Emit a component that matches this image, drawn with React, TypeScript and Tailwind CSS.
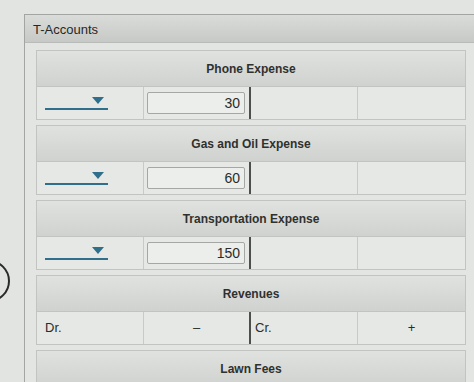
const accounts = [
  { name: 'Phone Expense', value: '30' },
  { name: 'Gas and Oil Expense', value: '60' },
  { name: 'Transportation Expense', value: '150' },
]

function CardHeader({ title }: { title: string }) {
  return (
    <div className="h-[36px] flex items-center justify-center bg-gradient-to-b from-[#e0e2df] to-[#d0d2cf] border-b border-[#c2c4c1] text-[12px] font-bold text-[#2f312f]">
      {title}
    </div>
  )
}

function Dropdown() {
  return (
    <div className="h-full flex items-end pb-[9px] pl-[8px]">
      <div className="relative w-[63px] h-[14px] border-b-2 border-[#2f6f8c]">
        <svg className="absolute right-[4px] top-[1px]" width="12" height="8" viewBox="0 0 12 8">
          <path d="M0 0 H12 L6 7 Z" fill="#2f6f8c" />
        </svg>
      </div>
    </div>
  )
}

function ExpenseCard({ name, value }: { name: string; value: string }) {
  return (
    <div className="border border-[#c2c4c1] bg-[#e6e8e5]">
      <CardHeader title={name} />
      <div className="h-[32px] grid grid-cols-4">
        <div className="border-r border-[#c8cac7]">
          <Dropdown />
        </div>
        <div className="flex items-center pl-[3px] pr-[4px] border-r-2 border-[#4d4f4d]">
          <div className="w-full h-[22px] border border-[#a5a7a4] bg-[#eceeeb] rounded-[2px] flex items-center justify-end pr-[4px] text-[14px] text-[#2a2c2a]">
            {value}
          </div>
        </div>
        <div className="border-r border-[#c8cac7]" />
        <div />
      </div>
    </div>
  )
}

export default function App() {
  return (
    <div
      className="w-[474px] h-[382px] overflow-hidden bg-[#e2e4e1] pt-[14px] flex"
      style={{ fontFamily: '"Liberation Sans", Arial, sans-serif' }}
    >
      <div className="w-[24px] shrink-0 relative">
        <div className="absolute left-[-32px] top-[246px] w-[42px] h-[42px] rounded-full border-2 border-[#2a2a2a]" />
      </div>
      <div className="flex-1 border-l border-t border-[#a3a5a2] bg-[#e3e5e2] flex flex-col">
        <div className="h-[28px] shrink-0 flex items-center pt-[3px] px-[8px] bg-gradient-to-b from-[#dadcd9] to-[#c7c9c6] border-b border-[#b9bbb8] text-[13px] text-[#262826]">
          T-Accounts
        </div>
        <div className="flex flex-col gap-[5px] pl-[11px] pr-[8px] pt-[7px]">
          {accounts.map((a) => (
            <ExpenseCard key={a.name} name={a.name} value={a.value} />
          ))}
          <div className="border border-[#c2c4c1] bg-[#e6e8e5]">
            <CardHeader title="Revenues" />
            <div className="h-[32px] grid grid-cols-4 text-[13px] text-[#2a2c2a]">
              <div className="flex items-center pl-[8px] border-r border-[#c8cac7]">Dr.</div>
              <div className="flex items-center justify-center border-r-2 border-[#4d4f4d]">–</div>
              <div className="flex items-center pl-[4px] border-r border-[#c8cac7]">Cr.</div>
              <div className="flex items-center justify-center">+</div>
            </div>
          </div>
          <div className="border border-[#c2c4c1] bg-[#e6e8e5]">
            <CardHeader title="Lawn Fees" />
          </div>
        </div>
      </div>
    </div>
  )
}
